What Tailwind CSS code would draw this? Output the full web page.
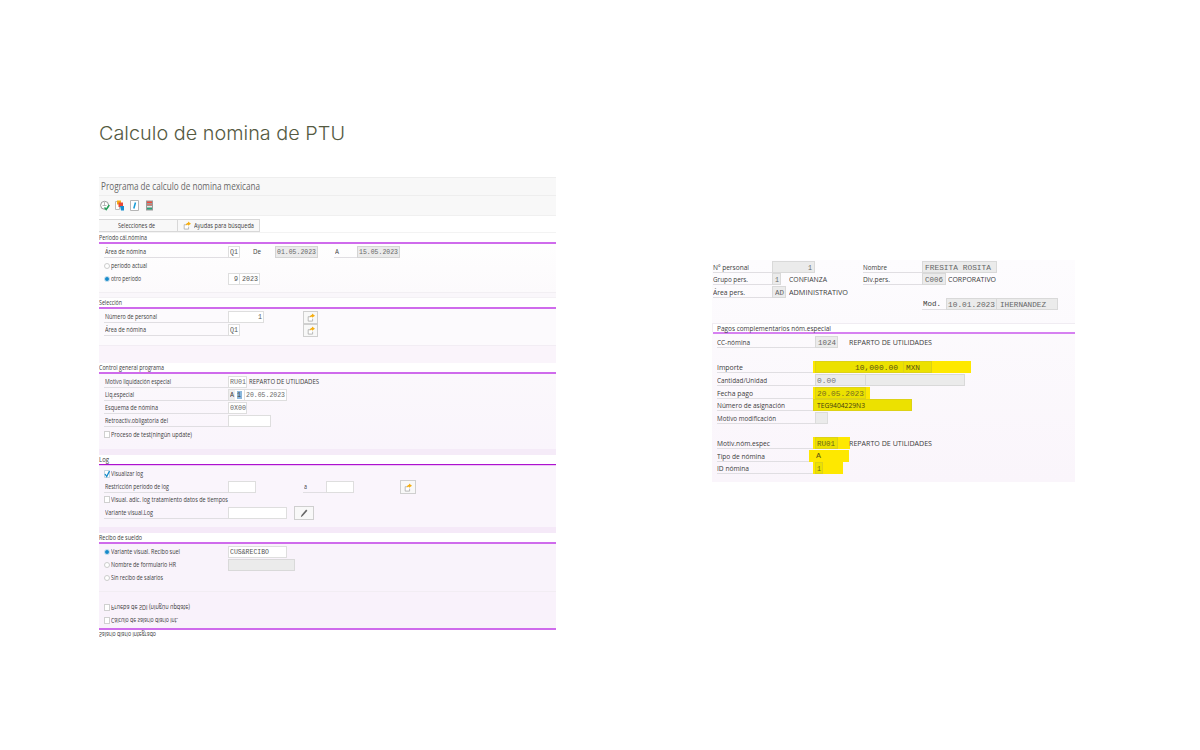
<!DOCTYPE html>
<html lang="es">
<head>
<meta charset="utf-8">
<title>Calculo de nomina de PTU</title>
<script src="https://cdn.jsdelivr.net/npm/@tailwindcss/browser@4"></script>
</head>
<body class="w-[1200px] h-[750px] overflow-hidden bg-white font-['Open_Sans',sans-serif] text-[7.6px] leading-[11px] text-[#3c3c3c] [&_i]:inline-block [&_i]:not-italic [&_i]:origin-left [&_i]:whitespace-nowrap [&_i]:shrink-0">
<svg class="hidden">
  <symbol id="share" viewBox="0 0 10 10"><path d="M4 4H1.500v5.500h5.500V6.500" fill="#fff" stroke="#aaa" stroke-width="1"/><path d="M3.600 5C3.600 2.500 5 1.500 6.300 1.500V0L10 2.700 6.300 5.200V4C5.200 3.800 4.500 4.200 3.600 5z" fill="#f5ae12"/></symbol>
</svg>
<main class="pt-[119px] pl-[98px]">
  <h1 class="h-[28px] pl-px text-[18.500px] leading-[28px] font-light text-[#555a42] font-[Inter,sans-serif]"><i data-w="246">Calculo de nomina de PTU</i></h1>
  <div class="flex items-start pt-[29px]">
    <section class="w-[458px] h-[463px] pl-px shrink-0">
      <div class="h-[19px] mt-px bg-[#f8f8f8] border-y border-[#eeeeee] pl-[2px] text-[10.400px] leading-[17px] text-[#686868]"><i data-w="159">Programa de calculo de nomina mexicana</i></div>
      <div class="h-[20px] bg-[#f8f8f8] border-b border-[#f0f0f0] flex items-center pl-px gap-[5px]">
        <svg class="w-[10px] h-[11px]" viewBox="0 0 10 11"><circle cx="4.600" cy="5.300" r="4" fill="#fff" stroke="#999"/><path d="M4.500 2v4M2.500 5.500h4" stroke="#aaa" stroke-width=".8"/><path d="M4.500 7.500l1.700 2L9.300 5" fill="none" stroke="#27a05a" stroke-width="1.500"/></svg>
        <svg class="w-[10px] h-[11px]" viewBox="0 0 10 11"><path d="M.5 1.500h4v8h-4z" fill="#fff" stroke="#bbb"/><path d="M2 .5h4v4H2z" fill="#f6ad18"/><path d="M3.500 2.500H8V7H3.500z" fill="#e84837"/><path d="M5 6h4v4.500H6z" fill="#168dce"/></svg>
        <svg class="w-[10px] h-[11px]" viewBox="0 0 10 11"><path d="M.5 .5h8v10h-8z" fill="#fff" stroke="#b5b5b5"/><path d="M5.500 2.500L3.800 8.500" stroke="#169bd5" stroke-width="1.500"/></svg>
        <svg class="w-[10px] h-[11px]" viewBox="0 0 10 11"><path d="M1 .5h7v10H1z" fill="#9a9a9a"/><path d="M2 1.500h5V3H2z" fill="#ef4d3c"/><path d="M2 4.200h5v1H2z" fill="#ef6d5c"/><path d="M2 6h5v1.200H2z" fill="#d8f4e7"/><path d="M2 8h5v1.300H2z" fill="#24a77a"/></svg>
      </div>
      <div class="h-[17px] pt-[3px] border-b border-[#f3f3f3] flex">
        <div class="w-[79px] h-[13px] bg-[#f8f8f8] border-y border-r border-[#d8d8d8] pl-[19px]"><i data-w="37">Selecciones de</i></div>
        <div class="w-[82px] h-[13px] bg-[#f8f8f8] border-y border-r border-[#d8d8d8] flex items-center pl-[5px] gap-[3px]"><svg class="w-[8px] h-[9px]"><use href="#share"/></svg><i data-w="60">Ayudas para búsqueda</i></div>
      </div>
      <h2 class="h-[9px] leading-[9px]"><i data-w="48">Período cál.nómina</i></h2>
      <div class="h-[2px] bg-[#cf6bec]"></div>
      <div class="h-[49px] pt-[2px] pl-[5px] bg-linear-to-b from-[#fefefe] to-[#fcfafc] border-b border-[#f2eff3]">
        <div class="h-[13px] flex">
          <div class="w-[124px] h-[12px] border-b border-[#e0dee2] pl-px"><i data-w="41">Área de nómina</i></div>
          <div class="w-[12px] h-[12px] bg-white border border-[#dedede] pl-px leading-[10px] font-['Liberation_Mono',monospace] text-[#555]"><i data-w="8">Q1</i></div>
          <div class="w-[35px] h-[12px] pl-[13px]"><i data-w="8">De</i></div>
          <div class="w-[43px] h-[12px] bg-[#ebebeb] border border-[#d4d4d4] pl-px leading-[10px] font-['Liberation_Mono',monospace] text-[#686868]"><i data-w="39">01.05.2023</i></div>
          <div class="w-[23px] h-[12px] border-b border-[#e0dee2] ml-[16px] pl-[1px]"><i data-w="4">A</i></div>
          <div class="w-[43px] h-[12px] bg-[#ebebeb] border border-[#d4d4d4] pl-px leading-[10px] font-['Liberation_Mono',monospace] text-[#686868]"><i data-w="39">15.05.2023</i></div>
        </div>
        <div class="h-[13px] flex items-center"><span class="w-[6px] h-[6px] rounded-full bg-white border border-[#ccc] mr-px"></span><i data-w="36">período actual</i></div>
        <div class="h-[13px] flex items-center"><span class="w-[6px] h-[6px] rounded-full bg-[#168acb] border-[1.500px] border-[#cfe3ef] mr-px"></span><i data-w="30">otro período</i>
          <div class="w-[12px] h-[12px] ml-[87px] bg-white border border-[#dedede] pl-[5px] leading-[10px] font-['Liberation_Mono',monospace] text-[#555]"><i data-w="4">9</i></div>
          <div class="w-[20px] h-[12px] bg-white border border-l-0 border-[#dedede] pl-[2px] leading-[10px] font-['Liberation_Mono',monospace] text-[#555]"><i data-w="16">2023</i></div>
        </div>
      </div>
      <div class="h-[5px] bg-[#faf7fb] border-b border-[#f4f1f5]"></div>
      <h2 class="h-[9px] leading-[9px]"><i data-w="23">Selección</i></h2>
      <div class="h-[2px] bg-[#cf6bec]"></div>
      <div class="h-[37px] pt-[2px] pl-[5px] bg-[#fcfafd] border-b border-[#f2edf4]">
        <div class="h-[13px] flex">
          <div class="w-[124px] h-[12px] border-b border-[#e0dee2] pl-px"><i data-w="52">Número de personal</i></div>
          <div class="w-[36px] h-[12px] bg-white border border-[#dedede] pl-[29px] leading-[10px] font-['Liberation_Mono',monospace] text-[#555]"><i data-w="4">1</i></div>
          <div class="w-[15px] h-[13px] ml-[39px] border border-[#cfcfcf] bg-[#f8f8f8] flex items-center justify-center"><svg class="w-[8px] h-[9px]"><use href="#share"/></svg></div>
        </div>
        <div class="h-[13px] flex">
          <div class="w-[124px] h-[12px] border-b border-[#e0dee2] pl-px"><i data-w="41">Área de nómina</i></div>
          <div class="w-[12px] h-[12px] bg-white border border-[#dedede] pl-px leading-[10px] font-['Liberation_Mono',monospace] text-[#555]"><i data-w="8">Q1</i></div>
          <div class="w-[15px] h-[13px] ml-[63px] border border-[#cfcfcf] bg-[#f8f8f8] flex items-center justify-center"><svg class="w-[8px] h-[9px]"><use href="#share"/></svg></div>
        </div>
      </div>
      <div class="h-[17px] bg-[#faf4fb]"></div>
      <h2 class="h-[9px] leading-[9px]"><i data-w="65">Control general programa</i></h2>
      <div class="h-[2px] bg-[#cf6bec]"></div>
      <div class="h-[75px] pt-[2px] pl-[5px] bg-linear-to-b from-[#fbf8fc] to-[#faf5fc]">
        <div class="h-[13px] flex">
          <div class="w-[124px] h-[12px] border-b border-[#e0dee2] pl-px"><i data-w="66">Motivo liquidación especial</i></div>
          <div class="w-[19px] h-[12px] bg-white border border-[#dedede] pl-px leading-[10px] font-['Liberation_Mono',monospace] text-[#6b6b6b]"><i data-w="16">RU01</i></div>
          <div class="pl-[2px]"><i data-w="70">REPARTO DE UTILIDADES</i></div>
        </div>
        <div class="h-[13px] flex">
          <div class="w-[124px] h-[12px] border-b border-[#e0dee2] pl-px"><i data-w="29">Liq.especial</i></div>
          <div class="w-[7px] h-[12px] bg-[#eee] border-y border-l border-[#dedede] pl-px leading-[10px] font-['Liberation_Mono',monospace]"><i data-w="4">A</i></div>
          <div class="w-[9px] h-[12px] bg-white border-y border-[#dedede] px-[2px] py-px"><div class="h-[8px] bg-[#8db8dc] leading-[8px] font-['Liberation_Mono',monospace]"><i data-w="4">1</i></div></div>
          <div class="w-[43px] h-[12px] bg-white border border-[#dedede] pl-px leading-[10px] font-['Liberation_Mono',monospace] text-[#6b6b6b]"><i data-w="39">20.05.2023</i></div>
        </div>
        <div class="h-[13px] flex">
          <div class="w-[124px] h-[12px] border-b border-[#e0dee2] pl-px"><i data-w="53">Esquema de nómina</i></div>
          <div class="w-[19px] h-[12px] bg-white border border-[#dedede] pl-px leading-[10px] font-['Liberation_Mono',monospace] text-[#6b6b6b]"><i data-w="16">0X00</i></div>
        </div>
        <div class="h-[13px] flex">
          <div class="w-[124px] h-[12px] border-b border-[#e0dee2] pl-px"><i data-w="63">Retroactiv.obligatoria del</i></div>
          <div class="w-[43px] h-[12px] bg-white border border-[#dedede]"></div>
        </div>
        <div class="h-[13px] flex items-center"><span class="w-[6px] h-[7px] bg-white border border-[#d0d0d0] mr-px"></span><i data-w="81">Proceso de test(ningún update)</i></div>
      </div>
      <div class="h-[6px] bg-[#f5ebf8]"></div>
      <h2 class="h-[9px] leading-[9px]"><i data-w="10">Log</i></h2>
      <div class="h-[2px] bg-[#ad12cf] border-b border-[#ecc5f5]"></div>
      <div class="h-[61px] pt-px pl-[5px] bg-[#faf5fc]">
        <div class="h-[13px] flex items-center"><svg class="w-[6px] h-[8px] mr-px" viewBox="0 0 6 8"><path d="M.5.500h5v7h-5z" fill="#fff" stroke="#c5d5df"/><path d="M1 4l1.700 2.500L5.500 1" fill="none" stroke="#168acb" stroke-width="1.300"/></svg><i data-w="32">Visualizar log</i></div>
        <div class="h-[13px] flex">
          <div class="w-[124px] h-[12px] mt-px border-b border-[#e0dee2] pl-px"><i data-w="64">Restricción período de log</i></div>
          <div class="w-[28px] h-[12px] mt-px bg-white border border-[#dedede]"></div>
          <div class="w-[23px] h-[12px] mt-px border-b border-[#e0dee2] ml-[47px] pl-px"><i data-w="3">a</i></div>
          <div class="w-[28px] h-[12px] mt-px bg-white border border-[#dedede]"></div>
          <div class="w-[16px] h-[14px] ml-[46px] border border-[#cfcfcf] bg-[#f8f8f8] flex items-center justify-center shrink-0"><svg class="w-[8px] h-[9px]"><use href="#share"/></svg></div>
        </div>
        <div class="h-[13px] flex items-center"><span class="w-[6px] h-[7px] bg-white border border-[#d0d0d0] mr-px"></span><i data-w="117">Visual. adic. log tratamiento datos de tiempos</i></div>
        <div class="h-[13px] flex">
          <div class="w-[124px] h-[12px] mt-px border-b border-[#e0dee2] pl-px"><i data-w="48">Variante visual.Log</i></div>
          <div class="w-[59px] h-[12px] mt-px bg-white border border-[#dedede]"></div>
          <div class="w-[20px] h-[14px] ml-[7px] border border-[#cfcfcf] bg-[#f8f8f8] flex items-center justify-center shrink-0"><svg class="w-[8px] h-[9px]" viewBox="0 0 8 9"><path d="M.8 8.300l.7-2.300 4.700-5.400 1.200 1.200L2.700 7z" fill="#666"/></svg></div>
        </div>
      </div>
      <div class="h-[6px] bg-[#f5e9f8]"></div>
      <h2 class="h-[9px] leading-[9px]"><i data-w="43">Recibo de sueldo</i></h2>
      <div class="h-[2px] bg-[#cf6bec]"></div>
      <div class="h-[48px] pt-px pl-[5px] bg-[#f9f3fb] border-b border-[#f2edf3]">
        <div class="h-[13px] flex items-center"><span class="w-[6px] h-[6px] rounded-full bg-[#168acb] border-[1.500px] border-[#cfe3ef] mr-px"></span><div class="w-[117px]"><i data-w="69">Variante visual. Recibo suel</i></div>
          <div class="w-[59px] h-[12px] bg-white border border-[#dedede] pl-px leading-[10px] font-['Liberation_Mono',monospace] text-[#555]"><i data-w="39">CUS&amp;RECIBO</i></div></div>
        <div class="h-[13px] flex items-center"><span class="w-[6px] h-[6px] rounded-full bg-white border border-[#ccc] mr-px"></span><div class="w-[117px]"><i data-w="65">Nombre de formulario HR</i></div>
          <div class="w-[67px] h-[12px] bg-[#ebebeb] border border-[#d9d9d9]"></div></div>
        <div class="h-[13px] flex items-center"><span class="w-[6px] h-[6px] rounded-full bg-white border border-[#ccc] mr-px"></span><i data-w="52">Sin recibo de salarios</i></div>
      </div>
      <div class="h-[36px] pt-[9px] pl-[5px] bg-[#f9f2fb]">
        <div class="h-[13px] flex items-center"><span class="w-[6px] h-[7px] bg-white border border-[#d0d0d0] mr-px"></span><div class="-scale-y-100"><i data-w="79">Prueba de SDI (ningún update)</i></div></div>
        <div class="h-[13px] flex items-center"><span class="w-[6px] h-[7px] bg-white border border-[#d0d0d0] mr-px"></span><div class="-scale-y-100"><i data-w="67">Cálculo de salario diario int.</i></div></div>
      </div>
      <div class="h-[2px] bg-[#cf6bec]"></div>
      <div class="h-[9px] leading-[9px] -scale-y-100"><i data-w="57">Salario diario integrado</i></div>
    </section>

    <section class="w-[363px] h-[222px] mt-[84px] ml-[156px] shrink-0 text-[7.500px] leading-[12px] bg-linear-to-b from-[#fdfcfe] to-[#faf5fb]">
      <div class="h-[63px] pt-[.5px] pl-px">
        <div class="h-[12.650px] flex">
          <div class="w-[59px] h-[12px] border-b border-[#e0dee2]"><i data-w="36">Nº personal</i></div>
          <div class="w-[43px] h-[12px] bg-[#ebebeb] border border-[#d9d9d9] pl-[35px] font-['Liberation_Mono',monospace] text-[#666]"><i data-w="4">1</i></div>
          <div class="w-[59px] h-[12px] border-b border-[#e0dee2] ml-[48px]"><i data-w="24">Nombre</i></div>
          <div class="w-[75px] h-[12px] bg-[#ebebeb] border border-[#d9d9d9] pl-[2px] font-['Liberation_Mono',monospace] text-[#666]"><i data-w="66">FRESITA ROSITA</i></div>
        </div>
        <div class="h-[12.650px] flex">
          <div class="w-[59px] h-[12px] border-b border-[#e0dee2]"><i data-w="35">Grupo pers.</i></div>
          <div class="w-[9px] h-[12px] bg-[#ebebeb] border border-[#d9d9d9] pl-[2px] font-['Liberation_Mono',monospace] text-[#666]"><i data-w="4">1</i></div>
          <div class="w-[82px] pl-[8px]"><i data-w="38">CONFIANZA</i></div>
          <div class="w-[59px] h-[12px] border-b border-[#e0dee2]"><i data-w="27">Div.pers.</i></div>
          <div class="w-[24px] h-[12px] bg-[#ebebeb] border border-[#d9d9d9] pl-[2px] font-['Liberation_Mono',monospace] text-[#666]"><i data-w="18">C006</i></div>
          <div class="pl-[2px]"><i data-w="48">CORPORATIVO</i></div>
        </div>
        <div class="h-[12.650px] flex">
          <div class="w-[59px] h-[12px] border-b border-[#e0dee2]"><i data-w="32">Área pers.</i></div>
          <div class="w-[14px] h-[12px] bg-[#ebebeb] border border-[#d9d9d9] pl-[2px] font-['Liberation_Mono',monospace] text-[#666]"><i data-w="9">AD</i></div>
          <div class="pl-[3px]"><i data-w="59">ADMINISTRATIVO</i></div>
        </div>
        <div class="h-[12.650px] flex pl-[209px] font-['Liberation_Mono',monospace]">
          <div class="w-[24px] h-[12px] border-b border-[#e0dee2] pl-px"><i data-w="18">Mod.</i></div>
          <div class="w-[51px] h-[12px] bg-[#ebebeb] border border-[#d9d9d9] pl-px text-[#666]"><i data-w="47">10.01.2023</i></div>
          <div class="w-[61px] h-[12px] bg-[#ebebeb] border border-l-0 border-[#d9d9d9] pl-[3px] text-[#666]"><i data-w="46">IHERNANDEZ</i></div>
        </div>
      </div>
      <h2 class="h-[9px] leading-[9px] pl-[4px] bg-white border-t border-l border-[#f0ecf2]"><i data-w="114">Pagos complementarios nóm.especial</i></h2>
      <div class="h-[2px] ml-px bg-[#d681f1]"></div>
      <div class="pt-[2px] pl-[5px]">
        <div class="h-[25.300px] flex">
          <div class="w-[98px] h-[12px] border-b border-[#e0dee2]"><i data-w="33">CC-nómina</i></div>
          <div class="w-[23px] h-[12px] bg-[#ebebeb] border border-[#d9d9d9] pl-[2px] font-['Liberation_Mono',monospace] text-[#666]"><i data-w="18">1024</i></div>
          <div class="pl-[11px]"><i data-w="83">REPARTO DE UTILIDADES</i></div>
        </div>
        <div class="h-[12.650px] flex">
          <div class="w-[96px] h-[12px] border-b border-[#e0dee2]"><i data-w="26">Importe</i></div>
          <div class="w-[158px] h-[12px] bg-[#fee800] flex pl-[2px] font-['Liberation_Mono',monospace] text-[#5a5412]">
            <div class="w-[89px] h-[12px] bg-[#ece100] border border-[#ddd216] pl-[39px]"><i data-w="43">10,000.00</i></div>
            <div class="w-[28px] h-[12px] bg-[#ece100] border border-l-0 border-[#ddd216] pl-[2px]"><i data-w="14">MXN</i></div>
          </div>
        </div>
        <div class="h-[12.650px] flex">
          <div class="w-[98px] h-[12px] border-b border-[#e0dee2]"><i data-w="50">Cantidad/Unidad</i></div>
          <div class="w-[51px] h-[12px] bg-[#ebebeb] border border-[#d9d9d9] pl-px font-['Liberation_Mono',monospace] text-[#777]"><i data-w="19">0.00</i></div>
          <div class="w-[99px] h-[12px] bg-[#ebebeb] border border-l-0 border-[#d9d9d9]"></div>
        </div>
        <div class="h-[12.650px] flex">
          <div class="w-[96px] h-[12px] border-b border-[#e0dee2]"><i data-w="36">Fecha pago</i></div>
          <div class="w-[57px] h-[12px] bg-[#fee800] flex pl-[2px] font-['Liberation_Mono',monospace] text-[#756d20]">
            <div class="w-[51px] h-[12px] bg-[#ece100] border border-[#ddd216] pl-px"><i data-w="47">20.05.2023</i></div>
          </div>
        </div>
        <div class="h-[12.650px] flex">
          <div class="w-[96px] h-[12px] border-b border-[#e0dee2]"><i data-w="68">Número de asignación</i></div>
          <div class="w-[99px] h-[12px] bg-[#ece100] border border-[#ddd216] pl-[3px] leading-[11px] text-[#3f3b10]"><i data-w="48">TEG9404229N3</i></div>
        </div>
        <div class="h-[25.300px] flex">
          <div class="w-[98px] h-[12px] border-b border-[#e0dee2]"><i data-w="59">Motivo modificación</i></div>
          <div class="w-[13px] h-[12px] bg-[#ebebeb] border border-[#dcdcdc]"></div>
        </div>
        <div class="h-[12.650px] flex">
          <div class="w-[96px] h-[12px] border-b border-[#e0dee2]"><i data-w="53">Motiv.nóm.espec</i></div>
          <div class="w-[37px] h-[12px] bg-[#fee800] flex pl-[2px]">
            <div class="w-[23px] h-[12px] shrink-0 bg-[#ece100] border border-[#ddd216] pl-px font-['Liberation_Mono',monospace] text-[#6a6318]"><i data-w="18">RU01</i></div>
            <div class="pl-[11px] shrink-0"><i data-w="83">REPARTO DE UTILIDADES</i></div>
          </div>
        </div>
        <div class="h-[12.650px] flex">
          <div class="w-[92px] h-[12px] border-b border-[#e0dee2]"><i data-w="48">Tipo de nómina</i></div>
          <div class="w-[40px] h-[12px] bg-[#fee800] pl-[7px] font-['Liberation_Mono',monospace] text-[#5a5412]"><i data-w="5">A</i></div>
        </div>
        <div class="h-[12.650px] flex">
          <div class="w-[96px] h-[12px] border-b border-[#e0dee2]"><i data-w="32">ID nómina</i></div>
          <div class="w-[30px] h-[12px] bg-[#fee800] flex pl-[2px]">
            <div class="w-[8px] h-[12px] bg-[#ece100] border border-[#ddd216] pl-px font-['Liberation_Mono',monospace] text-[#6a6318]"><i data-w="4">1</i></div>
          </div>
        </div>
      </div>
    </section>
  </div>
</main>
<script>
  function fitLabel(el) {
    el.style.transform = 'none';
    var target = Number(el.dataset.w), natural = el.getBoundingClientRect().width;
    if (!natural) return;
    el.style.transform = 'scaleX(' + target / natural + ')';
    el.style.marginRight = (target - natural) + 'px';
  }
  var labels = document.querySelectorAll('i[data-w]');
  function fitAll() { labels.forEach(fitLabel); }
  var sizes = new ResizeObserver(function (entries) {
    entries.forEach(function (entry) { fitLabel(entry.target); });
  });
  labels.forEach(function (el) { sizes.observe(el); });
  fitAll();
  window.addEventListener('load', fitAll);
  document.fonts.ready.then(fitAll);
</script>
</body>
</html>
